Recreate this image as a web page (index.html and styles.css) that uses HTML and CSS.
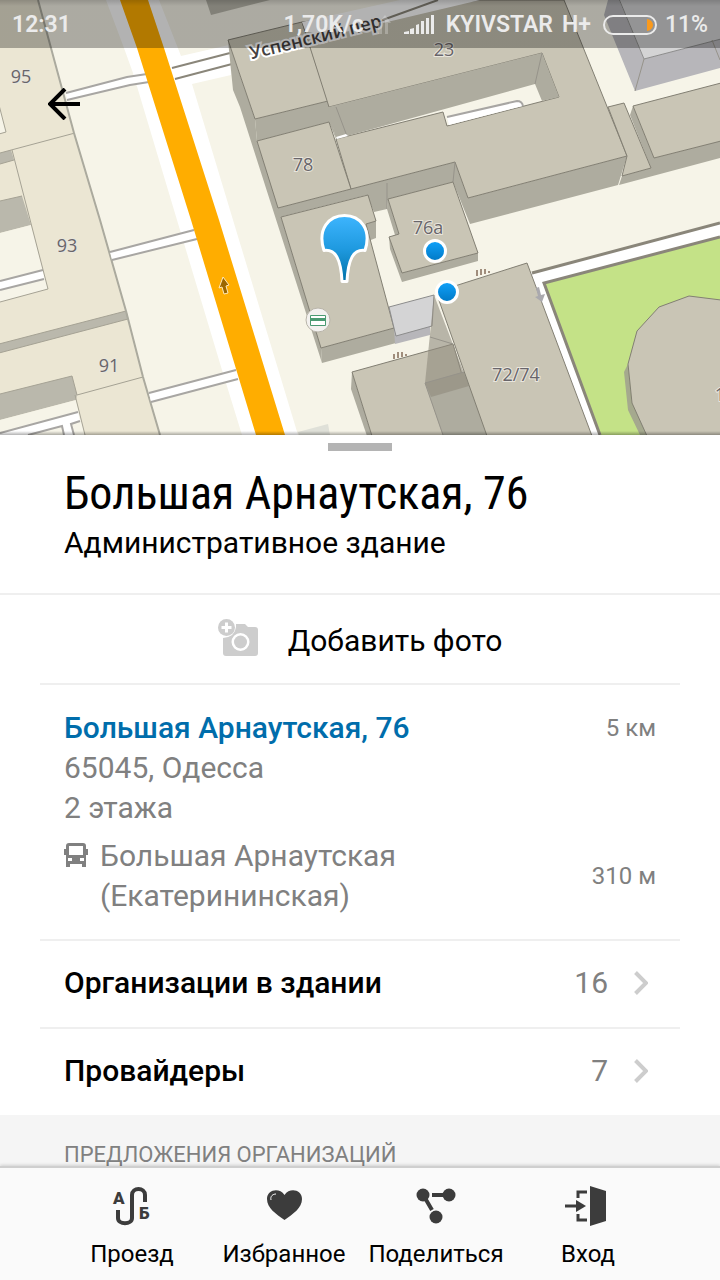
FILE: index.html
```html
<!DOCTYPE html>
<html lang="ru">
<head>
<meta charset="utf-8">
<meta name="viewport" content="width=device-width, initial-scale=1">
<title>Большая Арнаутская, 76</title>
<link rel="stylesheet" href="styles.css">
</head>
<body>
<div class="app">
  <main class="content">
    <section class="map" aria-label="Карта">
      <svg class="map-canvas" viewBox="0 0 720 435" preserveAspectRatio="xMidYMid slice">
        <defs>
          <linearGradient id="pinFill" x1="0" y1="0" x2="0" y2="1">
            <stop offset="0" stop-color="#3eb5fe"/><stop offset="0.5" stop-color="#1f9ae0"/><stop offset="1" stop-color="#0072a8"/>
          </linearGradient>
          <linearGradient id="dotFill" x1="0" y1="0" x2="0" y2="1">
            <stop offset="0" stop-color="#10a2fb"/><stop offset="1" stop-color="#0078c4"/>
          </linearGradient>
        </defs>
        <rect class="ground" width="720" height="435"/>

        <!-- main road with its side street -->
        <path class="white" d="M106 0H159L181 56L229 45L231 75L192 84L233 220L298 435H242L222 370L177 220L133 73L124 48Z"/>

        <!-- west blocks -->
        <path class="beige" d="M0 0H38L74 133L100 220L126 311L143 377L160 435H0Z"/>
        <path class="ground thin" d="M-1 105L6 132L-1 134Z"/>
        <path class="grey" d="M0 153L11 150L14 160L0 164ZM0 201L22 196L31 225L0 233Z"/>
        <path class="ground" d="M0 233L31 225L48 289L0 302Z"/>
        <path class="white" d="M0 281L43 270L44 279L0 290Z"/>
        <path class="path-line" d="M0 281L43 270M0 290L44 279"/>
        <path class="thin-line" d="M0 153L75 133M12 150L48 289L0 302M0 164L14 160M0 201L22 196"/>
        <path class="grey thin" d="M-1 344L126 311L128 319L-1 353Z"/>
        <path class="grey" d="M0 394L72 376L77 395L76 400L0 420Z"/>
        <path class="ground" d="M0 420L76 400L85 435H0Z"/>
        <path class="white" d="M0 433L78 412L80 421L71 424L74 435H64L62 426L28 435H0Z"/>
        <path class="path-line" d="M0 433L78 412M28 435L62 426L64 435M80 421L71 424L74 435"/>
        <path class="thin-line" d="M0 394L72 376L77 395L143 377M75 395L85 435"/>
        <path class="block-edge" d="M38 0L74 133L100 220L126 311L143 377L160 435"/>

        <!-- footpaths reaching the road -->
        <path class="white" d="M66 93L127 77L147 74L149 82L130 85L67 100ZM110 252L194 230L197 239L112 260ZM149 393L236 370L238 379L151 402Z"/>
        <path class="path-line" d="M66 93L127 77L147 74M67 100L130 85L149 82M110 252L194 230M112 260L197 239M149 393L236 370M151 402L238 379"/>
        <path class="street-line" d="M172 68L230 53M175 79L232 64"/>
        <path class="road" d="M120 0H148L164 48L219 220L285 435H256L191 220L137 48Z"/>
        <path class="arrow" d="M223 277L229 285L226 286L228 293L224 294L222 287L219 288Z"/>
        <path class="grey" d="M206 0L211 15L270 0Z"/>
        <path class="shade" d="M298 432L328 424L330 435H299Z"/>

        <!-- long wall on the east side of the road -->
        <path class="wall" d="M228 40L255 119L257 141L279 208L281 217L321 347L322 363L240 107L233 90Z"/>
        <path class="wall" d="M255 119L328 101L336 139L329 122L257 141Z"/>
        <path class="roof" d="M228 40L302 22L328 101L255 119Z"/>

        <!-- building 23 -->
        <path class="wall" d="M278 208L351 189L455 162L468 198L627 156L618 185L470 224L453 182L388 199L387 209L374 212L367 195L280 217Z"/>
        <path class="roof" fill-rule="evenodd" d="M302 22L480 0H564L627 156L468 198L455 162L351 189L336 139L443 112L447 126L559 97L542 53L329 107Z"/>
        <path class="white" d="M302 22L400 0H480L345 32L306 32Z"/>
        <path class="street-line" d="M377 22L438 0"/>
        <path class="wall" d="M329 107L542 53L559 97L542 101L535 84L347 136L336 139L328 108Z"/>
        <path class="white" d="M447 117L517 101Q522 101 523 106L449 125Z"/>
        <path class="path-line" d="M447 117L517 101Q522 101 523 106"/>
        <path class="wall-line" d="M535 84L542 53M336 107L347 136M387 209L387 183M453 182L455 162"/>
        <path class="white" d="M336 137L346 134L348 136L337 139Z"/>
        <path class="roof" d="M257 141L329 122L351 189L278 208Z"/>

        <!-- east outbuildings -->
        <path class="wall" d="M622 176L651 168L630 115L633 106L654 158L720 141V158L619 185Z"/>
        <path class="roof" d="M608 107L624 103L651 168L622 176L627 156ZM633 106L721 83V141L654 158Z"/>
        <path class="cool-wall" d="M608 0L604 15L635 91L720 68V39L644 59L619 0Z"/>
        <path class="cool-roof" d="M619 -1L644 59L721 39V-1Z"/>
        <path class="wall-line" d="M644 59L635 91M712 40L720 60"/>

        <!-- building 76 -->
        <path class="wall" d="M321 348L394 328L396 343L322 363ZM376 221V238L368 241L366 224Z"/>
        <path class="roof" d="M281 217L368 195L376 221L366 224L394 328L321 348Z"/>

        <!-- building 76a -->
        <path class="wall" d="M388 199L387 209L395 235L399 234ZM389 237L402 273L478 253V261L402 282L390 249Z"/>
        <path class="roof" d="M388 199L453 182L478 253L402 273L389 237L399 234Z"/>

        <!-- park -->
        <path class="white" d="M530 273L720 222V236L545 283L602 435H590Z"/>
        <path class="park" d="M543 283L720 237V435H601Z"/>
        <path class="street-line park-edge" d="M532 273L720 223M720 237L544 283L600 435"/>
        <path class="park-wall" d="M628 364L624 372L628 410L640 435H647L632 403Z"/>
        <path class="roof" d="M721 300L689 296L659 307L637 331L628 364L632 403L647 436H721Z"/>

        <!-- passage and building 72/74 -->
        <path class="cool-wall" d="M394 328L430 319V335L395 344Z"/>
        <path class="cool-roof" d="M389 307L434 295L432 326L396 336L394 328Z"/>
        <path class="fence" d="M394 359V354M398 358V352M402 357V352M406 356V354M477 276V270M481 275V269M485 274V269M489 273V271"/>
        <path class="wall" d="M352 372L372 436H367L351 389Z"/>
        <path class="roof" d="M352 372L453 344L480 436H372Z"/>
        <path class="wall" d="M425 383L470 370L489 436H443Z"/>
        <path class="deep" d="M434 295L425 383L431 397L469 386Z"/>
        <path class="wall-line" d="M430 337L453 344M425 383L464 372"/>
        <path class="roof" d="M436 292L527 263L592 436H487Z"/>
        <path class="lane" d="M536 288L539 287L541 295L545 294L542 302L535 297L538 296Z"/>
        <path class="wall-line" d="M425 383L443 435"/>

        <g class="labels">
          <text x="21" y="83">95</text>
          <text x="67" y="252">93</text>
          <text x="109" y="372">91</text>
          <text x="303" y="171">78</text>
          <text x="444" y="56">23</text>
          <text x="428" y="234">76а</text>
          <text x="516" y="381">72/74</text>
          <text x="720" y="401">1</text>
          <text class="street-name" x="317" y="43" transform="rotate(-14 317 43)">Успенский пер</text>
        </g>

        <circle class="badge" cx="318" cy="320" r="12"/>
        <path class="card" d="M310.500 315.500H325.500V325.500H310.500Z"/>
        <path class="card-stripe" d="M311 319.500H325"/>

        <circle class="dot" cx="435" cy="251" r="10.500"/>
        <circle class="dot" cx="447" cy="292" r="10.500"/>
        <path class="pin" d="M324 250.500C317 229 329 215.500 344.500 215.500S372 229 365 250.500C353 249 348 260 347 281.500H342C341 260 336 249 324 250.500Z"/>
      </svg>

      <header class="status">
        <span class="clock">12:31</span>
        <span class="speed">1,70K/с</span>
        <svg class="ghost" viewBox="0 0 20 20"><path d="M6 19V7H10V19ZM13 19V5L9 5L13 0L19 8H16V19Z"/></svg>
        <svg class="signal" viewBox="0 0 30 20"><path d="M0 19V17L5 16V19ZM6 19V14L10 13V19ZM12 19V10L15 9V19ZM17 19V6H20V19ZM22 19V3H25V19ZM27 19V0H30V19Z"/></svg>
        <span class="carrier">KYIVSTAR</span>
        <span>H+</span>
        <svg class="battery" viewBox="0 0 54 20"><path class="charge" d="M44 4C52 5 52 15 44 16Z"/><rect x="1" y="1" width="52" height="18" rx="9"/></svg>
        <span class="level">11%</span>
      </header>
      <button class="back" type="button" aria-label="Назад">
        <svg viewBox="0 0 32 32"><path d="M32 16H3M17 1L2 16L17 31"/></svg>
      </button>
    </section>

    <section class="sheet">
      <div class="heading">
        <div class="handle"></div>
        <h1>Большая Арнаутская, 76</h1>
        <p>Административное здание</p>
      </div>

      <button class="photo" type="button">
        <svg viewBox="0 0 40 38"><path class="body" fill-rule="evenodd" d="M18 5H27L30 8H37Q40 8 40 11V34Q40 37 37 37H8Q5 37 5 34V19Q17 18 18 8ZM22.500 14A9 9 0 1 0 22.500 32A9 9 0 1 0 22.500 14Z"/><circle class="body" cx="22.500" cy="23" r="6.500"/><circle class="body" cx="8.500" cy="8.500" r="8.500"/><path class="plus" d="M8.500 3.500V13.500M3.500 8.500H13.500"/></svg>
        <span>Добавить фото</span>
      </button>

      <div class="address">
        <div class="line">
          <a class="street" href="#map">Большая Арнаутская, 76</a>
          <span class="distance">5 км</span>
        </div>
        <p>65045, Одесса</p>
        <p>2 этажа</p>
        <div class="line stop">
          <svg class="bus" viewBox="0 0 24 24"><path fill-rule="evenodd" d="M5 0H19Q22 0 22 3V6H24V12H22V24H18V21H6V24H2V12H0V6H2V3Q2 0 5 0ZM5 3V12H19V3ZM4 15V18H8V15ZM16 15V18H20V15Z"/></svg>
          <p class="stop-name">Большая Арнаутская<br>(Екатерининская)</p>
          <span class="distance">310 м</span>
        </div>
      </div>

      <a class="row" href="#organizations">
        <span class="row-title">Организации в здании</span>
        <span class="count">16</span>
        <svg class="chevron" viewBox="0 0 14 24"><path d="M1.500 1.500L12 12L1.500 22.500"/></svg>
      </a>
      <a class="row" href="#providers">
        <span class="row-title">Провайдеры</span>
        <span class="count">7</span>
        <svg class="chevron" viewBox="0 0 14 24"><path d="M1.500 1.500L12 12L1.500 22.500"/></svg>
      </a>
      <h2 class="offers">Предложения организаций</h2>
    </section>
  </main>

  <nav class="tabs">
    <button type="button">
      <svg viewBox="0 0 40 40"><path class="stroke" d="M6 24V32C6 39 20 39 20 32V9C20 1 33 1 33 9V16"/><text x="1" y="18">А</text><text x="27" y="33">Б</text></svg>
      <span>Проезд</span>
    </button>
    <button type="button">
      <svg viewBox="0 0 40 40"><path class="solid" d="M20.500 34C12 28 3 22 3 13C3 4 15 1 20.500 9C26 1 38 4 38 13C38 22 29 28 20.500 34Z"/><path class="shine" d="M7 14C6 10 9 8 12 8"/></svg>
      <span>Избранное</span>
    </button>
    <button type="button">
      <svg viewBox="0 0 40 40"><circle class="solid" cx="7" cy="9" r="6.500"/><circle class="solid" cx="33" cy="9" r="6.500"/><circle class="solid" cx="20" cy="31" r="6.500"/><path class="stroke" d="M16 9H30M9 12L16 24"/></svg>
      <span>Поделиться</span>
    </button>
    <button type="button">
      <svg viewBox="2 0 40 40"><path class="solid" d="M24 0L40 5V35L24 40Z"/><path class="stroke thin-stroke" d="M21 6H12V12M21 34H12V28M-1 20H11"/><path class="solid" d="M10 14L20 20L10 26Z"/></svg>
      <span>Вход</span>
    </button>
  </nav>
</div>
</body>
</html>
```

FILE: styles.css
```css
* { box-sizing: border-box; }
body {
  margin: 0;
  font-family: Roboto, "Noto Sans", sans-serif;
  font-size: 30px;
  line-height: 40px;
  color: #000;
  background: #fff;
}
h1, h2, p { margin: 0; font-weight: 400; }
button { font: inherit; color: inherit; border: 0; padding: 0; background: none; }
a { color: inherit; text-decoration: none; }
svg { display: block; flex: none; }

.app { display: flex; flex-direction: column; height: 100vh; }
.content { flex: 1; min-height: 0; overflow: hidden; }

.map { position: relative; }
.map-canvas { width: 100%; height: auto; }
.map::after {
  content: "";
  position: absolute;
  inset: auto 0 0;
  height: 4px;
  background: linear-gradient(rgba(0, 0, 0, 0), rgba(0, 0, 0, 0.3));
}
.ground { fill: #f6f4e8; }
.white { fill: #fff; }
.beige { fill: #ebe6d3; }
.grey { fill: #bab8ac; }
.shade { fill: #dfe0d8; }
.wall { fill: #aeac9f; }
.roof { fill: #c9c5b5; stroke: #827f73; stroke-width: 1; }
.deep { fill: #8f8b7d; fill-opacity: 0.6; }
.cool-roof { fill: #d4d4d5; stroke: #8c8c8c; stroke-width: 1; }
.cool-wall { fill: #b7b6ba; }
.park { fill: #c4e287; }
.park-wall { fill: #a5a98e; }
.road { fill: #ffad00; }
.arrow { fill: #9b6700; stroke: #ffe9b8; stroke-width: 1; }
.lane { fill: #aaa9ae; }
.thin { stroke: #a5a294; stroke-width: 1; }
.thin-line { fill: none; stroke: #a5a294; stroke-width: 1; }
.wall-line { fill: none; stroke: #96938a; stroke-width: 1; }
.path-line { fill: none; stroke: #a8a6a3; stroke-width: 2; }
.street-line { fill: none; stroke: #8a867a; stroke-width: 2; }
.park-edge { stroke-width: 3; }
.block-edge { fill: none; stroke: #abaa9e; stroke-width: 2; }
.fence { fill: none; stroke: #a08d7c; stroke-width: 2; }
.labels {
  font-family: "Open Sans", "Noto Sans", sans-serif;
  font-size: 18px;
  text-anchor: middle;
  fill: #68656a;
  stroke: #e9e6dd;
  stroke-width: 2px;
  paint-order: stroke;
}
.street-name { font-size: 18px; font-weight: 600; fill: #45413f; stroke: #fff; stroke-width: 4px; }
.badge { fill: #f3f1ef; stroke: #b9b5aa; stroke-width: 1; }
.card { fill: #fff; stroke: #4a9a72; stroke-width: 1; }
.card-stripe { stroke: #4a9a72; stroke-width: 3; }
.dot { fill: url(#dotFill); stroke: #fff; stroke-width: 3; }
.pin { fill: url(#pinFill); stroke: #fff; stroke-width: 3; stroke-linejoin: round; }

.status {
  position: absolute;
  inset: 0 0 auto;
  display: flex;
  align-items: center;
  height: 48px;
  padding: 2px 12px 0;
  background: linear-gradient(rgba(0, 0, 0, 0.4), rgba(0, 0, 0, 0.3) 6px);
  color: #ebebeb;
  font-size: 23px;
  font-weight: 600;
}
.clock { flex: 1; }
.ghost { width: 20px; height: 20px; margin: 0 12px 0 8px; fill: #fff; opacity: 0.25; }
.signal { width: 30px; height: 20px; margin-right: 12px; fill: #ebebeb; }
.carrier { margin-right: 9px; }
.battery { width: 54px; height: 20px; margin: 0 8px 0 12px; fill: none; stroke: #ebebeb; stroke-width: 2; }
.level { font-weight: 500; }
.charge { fill: #fb9a1c; stroke: none; }
.back { position: absolute; left: 48px; top: 88px; }
.back svg { width: 32px; height: 32px; fill: none; stroke: #000; stroke-width: 4; }

.heading {
  padding: 8px 64px 30px;
  border-bottom: 2px solid #efefef;
}
.handle { width: 64px; height: 8px; margin: 0 auto 12px; background: #b4b4b4; }
h1 {
  font-family: "Roboto Condensed", Roboto, sans-serif;
  font-size: 46px;
  line-height: 60px;
}

.photo {
  display: flex;
  align-items: center;
  justify-content: center;
  gap: 30px;
  width: 100%;
  height: 88px;
  padding-top: 4px;
}
.photo svg { width: 40px; height: 38px; margin-bottom: 6px; }
.body { fill: #cdcdcd; }
.plus { stroke: #fff; stroke-width: 3; }

.address {
  margin: 0 40px;
  padding: 23px 24px;
  border-top: 2px solid #efefef;
  color: #808080;
}
.line { display: flex; align-items: center; }
.street { flex: 1; color: #006dab; font-weight: 500; }
.distance { font-size: 24px; }
.stop { margin-top: 8px; }
.bus { width: 24px; height: 24px; margin: 7px 12px 0 0; align-self: flex-start; fill: #808080; }
.stop-name { flex: 1; }

.row {
  display: flex;
  align-items: center;
  height: 88px;
  margin: 0 40px;
  padding: 0 32px 2px 24px;
  border-top: 2px solid #efefef;
}
.row-title { flex: 1; font-weight: 500; }
.count { color: #808080; }
.chevron { width: 14px; height: 24px; margin-left: 26px; fill: none; stroke: #cdcdcd; stroke-width: 4; }
.offers {
  padding: 20px 64px;
  background: #f5f5f5;
  color: #808080;
  font-size: 22px;
  text-transform: uppercase;
}

.tabs {
  position: relative;
  display: flex;
  padding: 18px 56px 8px;
  border-top: 2px solid #cfcfcf;
  background: #fafafa;
  box-shadow: 0 -1px 3px rgba(0, 0, 0, 0.15);
}
.tabs button {
  display: flex;
  flex: 1 1 0;
  flex-direction: column;
  align-items: center;
  gap: 10px;
  min-width: 0;
  font-size: 24px;
  line-height: 36px;
}
.tabs svg { width: 40px; height: 40px; overflow: visible; }
.tabs text { font-family: Roboto, sans-serif; font-size: 17px; font-weight: 900; fill: #3c3c3c; }
.solid { fill: #3c3c3c; }
.stroke { fill: none; stroke: #3c3c3c; stroke-width: 4; }
.thin-stroke { stroke-width: 3; }
.shine { fill: none; stroke: #fafafa; stroke-width: 1; }
```
